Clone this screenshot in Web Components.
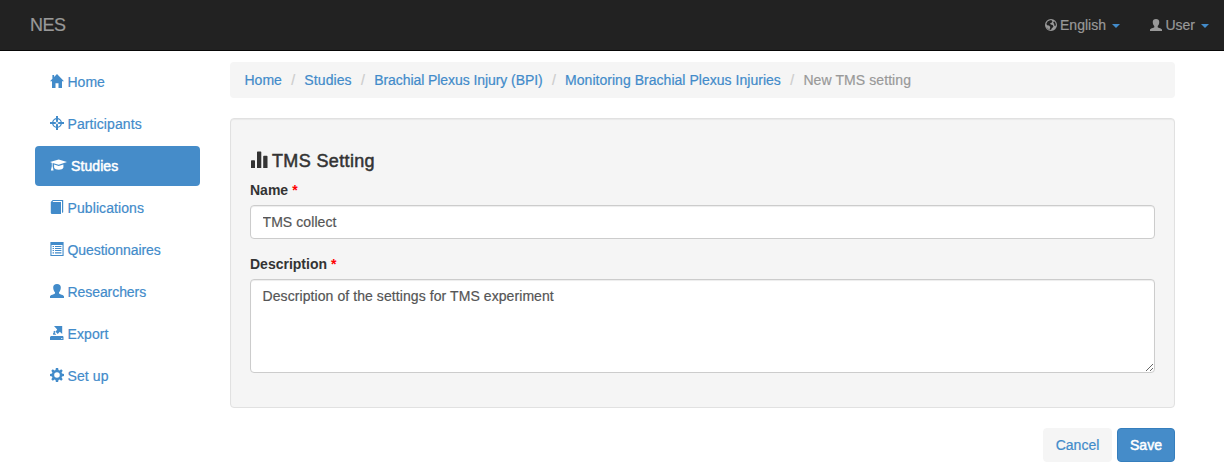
<!DOCTYPE html>
<html lang="en">
<head>
<meta charset="utf-8">
<title>NES</title>
<style>
html,body{margin:0;padding:0;background:#fff}
body{font:14px/20px "Liberation Sans",Arial,sans-serif;color:#333;height:466px;overflow:hidden;-webkit-text-stroke-width:.2px}
</style>
</head>
<body>
<nes-app></nes-app>
<script>
const ICONS = {
  home: [14, '<path d="M7 0 14 7.3H12V14H8.5V9.3H5.5V14H2V7.3H0L2.4 4.8V1H4.1V3Z"/>'],
  screenshot: [14, '<path d="M6 0H8V5.4L7 6.4 6 5.4ZM6 14H8V8.6L7 7.6 6 8.6ZM0 6V8H5.4L6.4 7 5.4 6ZM14 6V8H8.6L7.6 7 8.6 6Z"/><circle cx="7" cy="7" r="4.3" fill="none" stroke="currentColor" stroke-width="1.3"/>'],
  cap: [17, '<path d="M0 4.1 8.7 1.5 17 4.1 8.7 6.8 2.6 5V8.2L3.6 12.5H.9L1.8 8.2V4.7Z"/><path d="M4.1 6.5 8.7 8 13.4 6.5V9.6C12.7 12.5 4.8 12.5 4.1 9.6Z"/>'],
  book: [14, '<path fill-rule="evenodd" d="M2.8 0H13.2V12.3L12 13V1.1H3.2L2.5 1.9H11V14H2.1Q.8 14 .8 12.7V2Z"/>'],
  list: [14, '<path fill-rule="evenodd" d="M.4 0H13.6V14H.4ZM1.5 3V13H12.5V3Z"/><path d="M2.6 4H4V5H2.6ZM5 4H11.4V5H5ZM2.6 6H4V7H2.6ZM5 6H11.4V7H5ZM2.6 8H4V9H2.6ZM5 8H11.4V9H5ZM2.6 10.2H4V11.4H2.6ZM5 10.2H11.4V11.4H5Z"/>'],
  user: [14, '<path d="M7 0C9.5 0 10.8 1.4 10.8 3.4 10.8 5.4 10 7.2 9 8.2V9.6C9.6 10.5 14 11 14 12.6V14H0V12.6C0 11 4.4 10.5 5 9.6V8.2C4 7.2 3.2 5.4 3.2 3.4 3.2 1.4 4.5 0 7 0Z"/>'],
  export: [14, '<path fill-rule="evenodd" d="M4 0H12.2V8L9.8 5.8 7.7 8 5.6 5.8 7.2 3.4ZM4.5 4.8 5.7 6 4.2 7.2 3.2 6.1ZM3.1 7H4.8L6.3 8.7H3.1ZM1 10H13L13.5 11V14H0V11ZM11 12V12.7H12.4V12Z"/>'],
  cog: [14, '<path fill-rule="evenodd" d="M5.9 0H8.1L8.5 2 9.5 2.4 11.2 1.3 12.7 2.8 11.6 4.5 12 5.5 14 5.9V8.1L12 8.5 11.6 9.5 12.7 11.2 11.2 12.7 9.5 11.6 8.5 12 8.1 14H5.9L5.5 12 4.5 11.6 2.8 12.7 1.3 11.2 2.4 9.5 2 8.5 0 8.1V5.9L2 5.5 2.4 4.5 1.3 2.8 2.8 1.3 4.5 2.4 5.5 2ZM7 4.2A2.8 2.8 0 1 0 7 9.8 2.8 2.8 0 0 0 7 4.2Z"/>'],
  globe: [14, '<path fill-rule="evenodd" d="M7 0A7 7 0 1 1 7 14 7 7 0 0 1 7 0ZM7.3 1.3 5.2 1.7 3 3 1.6 5.5 2.4 7.2 4.7 7.7 6.2 9.3 5.6 11 6.2 12.5A5.8 5.8 0 0 1 1.7 9.4 5.8 5.8 0 0 0 7 12.8L7.9 10.7 9.8 8.9 9 7 6.7 6.5 5.9 4.9 7.6 4.3 8.7 3ZM10.5 2.7 9.6 4.4 10.8 5.8 10.7 7.2 12 8.6 12.7 6.8 12 4.2Z"/>'],
  stats: [18, '<path d="M1 12Q1 11.3 1.7 11.3H4.3Q5 11.3 5 12V19H1ZM7 3.2Q7 2.5 7.7 2.5H10.6Q11.3 2.5 11.3 3.2V19H7ZM13.2 7.4Q13.2 6.7 13.9 6.7H16.8Q17.5 6.7 17.5 7.4V19H13.2Z" transform="translate(0 -1)"/>']
};

/* Base class: clones a template string into an open shadow root. */
class NesElement extends HTMLElement {
  connectedCallback() {
    if (this.shadowRoot) return;
    const t = document.createElement('template');
    t.innerHTML = this.render();
    this.attachShadow({mode: 'open'}).append(t.content.cloneNode(true));
  }
}
const define = (name, render) => customElements.define(name, class extends NesElement {
  render() { return render(this); }
});

define('nes-icon', el => {
  const [w, body] = ICONS[el.getAttribute('name')];
  const h = w === 18 ? 18 : 14;
  const k = (el.getAttribute('size') || h) / h;
  return `<style>:host{display:block;flex:none;width:${w * k}px;height:${h * k}px}svg{display:block}</style>
  <svg width="${w * k}" height="${h * k}" viewBox="0 0 ${w} ${h}" fill="currentColor" aria-hidden="true">${body}</svg>`;
});

define('nes-navbar', () => `<style>
  :host{display:flex;justify-content:space-between;height:50px;background:#222;border-bottom:1px solid #080808;color:#999;padding-left:30px}
  .brand{font-size:18px;line-height:20px;padding-top:15px;letter-spacing:-.45px}
  .menus{display:flex;gap:30px;padding:15px 15px 0 0}
  </style><span class="brand">NES</span><div class="menus"><slot></slot></div>`);

define('nes-menu', el => `<style>
  :host{display:flex;height:20px;white-space:nowrap}
  nes-icon{margin:4px 3.5px 0 0}
  .caret{width:0;height:0;margin:9px 0 0 6px;border:4px solid transparent;border-top-color:#428bca;border-bottom:0}
  </style><nes-icon name="${el.getAttribute('icon')}" size="12"></nes-icon><span><slot></slot></span><i class="caret"></i>`);

define('nes-nav-item', el => `<style>
  :host{display:flex;height:40px;box-sizing:border-box;padding:10px 15px;border-radius:4px;color:#428bca;white-space:nowrap}
  :host([active]){background:#458cc9;color:#fff;-webkit-text-stroke:.5px #fff}
  nes-icon{margin:2px 3.5px 0 0}
  :host([active]) nes-icon{margin-right:4px}
  </style><nes-icon name="${el.getAttribute('icon')}"></nes-icon><span><slot></slot></span>`);

define('nes-sidebar', () => `<style>
  :host{display:flex;flex-direction:column;gap:2px;width:165px;flex:none}
  </style><slot></slot>`);

define('nes-crumb', () => `<style>
  :host{display:block;color:#428bca;white-space:nowrap}
  :host([current]){color:#999}
  :host(:not(:first-child))::before{content:"/";color:#ccc;padding:0 9.3px;letter-spacing:0}
  </style><slot></slot>`);

define('nes-breadcrumb', () => `<style>
  :host{display:flex;height:36px;box-sizing:border-box;padding:8px 14.5px;background:#f5f5f5;border-radius:4px}
  </style><slot></slot>`);

define('nes-panel', el => `<style>
  :host{display:block;height:290px;box-sizing:border-box;margin-top:20px;padding:32px 19px 0;background:#f5f5f5;border:1px solid #e1e1e1;border-radius:4px;box-shadow:inset 0 1px 1px rgba(0,0,0,.05)}
  h4{display:flex;margin:0 0 9px;height:20px;font-size:18px;line-height:20px;font-weight:400;letter-spacing:.36px;-webkit-text-stroke:.5px #333}
  nes-icon{margin:-1px 4px 0 0}
  </style><h4><nes-icon name="stats"></nes-icon><span>${el.getAttribute('heading')}</span></h4><slot></slot>`);

define('nes-field', el => {
  const v = el.getAttribute('value'), label = el.getAttribute('label');
  const control = el.hasAttribute('multiline')
    ? `<textarea id="c" style="height:94px">${v}</textarea>` : `<input id="c" value="${v}" style="height:34px">`;
  return `<style>
  :host{display:block;margin-bottom:15px}
  label{display:block;height:20px;margin-bottom:5px;font-weight:700;-webkit-text-stroke-width:0}
  b{color:red;margin-left:4px}
  input,textarea{display:block;box-sizing:border-box;width:100%;margin:0;padding:6px 11.5px;border:1px solid #ccc;border-radius:4px;background:#fff;color:#555;font:inherit;letter-spacing:.08px;outline:0;box-shadow:inset 0 1px 1px rgba(0,0,0,.075);resize:vertical}
  </style><label for="c">${label}<b>*</b></label>${control}`;
});

define('nes-button', () => `<style>
  :host{display:flex;justify-content:center;width:69px;height:34px;box-sizing:border-box;padding:6px 0;border:1px solid #f5f5f5;border-radius:4px;background:#f5f5f5;color:#428bca}
  :host([primary]){width:58px;background:#458cc9;border-color:#357ebd;color:#fff;-webkit-text-stroke:.5px #fff}
  </style><slot></slot>`);

define('nes-app', () => `<style>
  :host{display:block}
  .body{display:flex;gap:30px;padding:11px 49px 0 35px}
  main{flex:1;min-width:0}
  .actions{display:flex;justify-content:flex-end;gap:5px;margin-top:20px}
  .tight{letter-spacing:-.07px}
  .slight{letter-spacing:.03px}
  .wide{letter-spacing:.09px}
  </style>
  <nes-navbar><nes-menu icon="globe">English</nes-menu><nes-menu icon="user">User</nes-menu></nes-navbar>
  <div class="body">
    <nes-sidebar>
      <nes-nav-item icon="home">Home</nes-nav-item>
      <nes-nav-item icon="screenshot" class="wide">Participants</nes-nav-item>
      <nes-nav-item icon="cap" class="wide" active>Studies</nes-nav-item>
      <nes-nav-item icon="book" class="wide">Publications</nes-nav-item>
      <nes-nav-item icon="list" class="tight">Questionnaires</nes-nav-item>
      <nes-nav-item icon="user" class="tight">Researchers</nes-nav-item>
      <nes-nav-item icon="export" class="wide">Export</nes-nav-item>
      <nes-nav-item icon="cog" class="wide">Set up</nes-nav-item>
    </nes-sidebar>
    <main>
      <nes-breadcrumb>
        <nes-crumb>Home</nes-crumb><nes-crumb class="wide">Studies</nes-crumb><nes-crumb class="tight">Brachial Plexus Injury (BPI)</nes-crumb><nes-crumb class="slight">Monitoring Brachial Plexus Injuries</nes-crumb><nes-crumb class="wide" current>New TMS setting</nes-crumb>
      </nes-breadcrumb>
      <nes-panel heading="TMS Setting">
        <nes-field label="Name" value="TMS collect"></nes-field>
        <nes-field label="Description" value="Description of the settings for TMS experiment" multiline></nes-field>
      </nes-panel>
      <div class="actions"><nes-button>Cancel</nes-button><nes-button primary>Save</nes-button></div>
    </main>
  </div>`);
</script>
</body>
</html>
